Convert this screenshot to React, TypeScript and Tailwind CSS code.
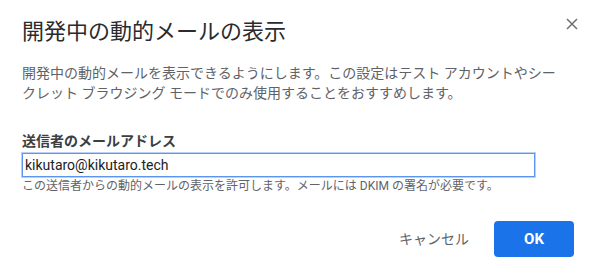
import React from "react";

export default function App() {
  return (
    <div
      className="relative w-[594px] h-[275px] bg-white overflow-hidden"
      style={{ fontFamily: 'Roboto, "Noto Sans CJK JP", "Noto Sans", sans-serif' }}
    >
      <button className="absolute left-[562px] top-[14px] w-5 h-5 flex items-center justify-center">
        <svg width="12" height="12" viewBox="0 0 12 12">
          <path d="M1 1 L11 11 M11 1 L1 11" stroke="#707070" strokeWidth="1.5" fill="none" />
        </svg>
      </button>
      <div className="pl-[22px] pr-[20px] pt-[18px] flex flex-col">
        <h1 className="text-[22px] leading-[28px] text-[#2a2b2e] font-normal">開発中の動的メールの表示</h1>
        <p className="mt-[17px] text-[14px] leading-[20px] text-[#5f6368]">
          開発中の動的メールを表示できるようにします。この設定はテスト アカウントやシー
          <br />
          クレット ブラウジング モードでのみ使用することをおすすめします。
        </p>
        <label className="mt-[28px] text-[14px] leading-[20px] font-bold text-[#3c4043]">送信者のメールアドレス</label>
        <div className="mt-[2px] w-[513px] h-[24px] border border-[#5b95f0] shadow-[0_0_0_1px_#b9d1f8] flex items-center pl-[2px]">
          <span className="text-[14px] text-[#202124] leading-[20px]">kikutaro@kikutaro.tech</span>
        </div>
        <p className="mt-[1px] text-[12px] leading-[16px] text-[#5f6368]">
          この送信者からの動的メールの表示を許可します。メールには DKIM の署名が必要です。
        </p>
        <div className="mt-[27px] flex justify-end items-center gap-[9px]">
          <button className="h-9 px-4 text-[14px] text-[#5f6368] leading-[20px]">キャンセル</button>
          <button className="w-[80px] h-9 rounded-[4px] bg-[#1a73e8] text-white text-[15px] font-bold">OK</button>
        </div>
      </div>
    </div>
  );
}
